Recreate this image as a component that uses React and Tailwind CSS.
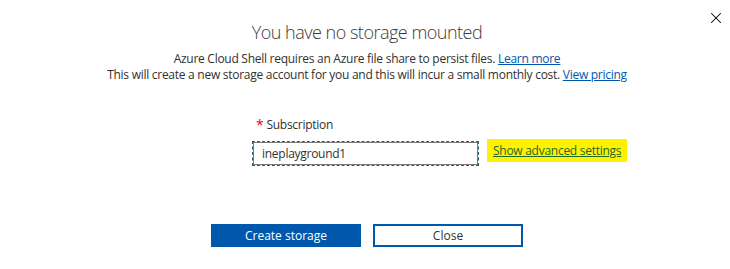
import { X } from 'lucide-react';

export default function App() {
  return (
    <div
      className="relative w-[730px] h-[269px] bg-white text-[#323130] overflow-hidden"
      style={{ fontFamily: '"Open Sans", "Noto Sans", sans-serif' }}
    >
      {/* Close icon */}
      <button className="absolute top-[9px] right-[5px] w-[18px] h-[18px] flex items-center justify-center text-black">
        <X size={18} strokeWidth={1.4} />
      </button>

      <div className="flex flex-col items-center pl-[4px] pt-[19px]">
        <h2 className="text-[18px] tracking-[-0.5px] font-light leading-[26px] text-[#3b3a39]">You have no storage mounted</h2>
        <div className="mt-[6px] text-[12px] tracking-[-0.27px] leading-[16px] text-center">
          <p>
            Azure Cloud Shell requires an Azure file share to persist files.{' '}
            <a href="#" className="text-[#0058ad] underline">Learn more</a>
          </p>
          <p>
            This will create a new storage account for you and this will incur a small monthly cost.{' '}
            <a href="#" className="text-[#0058ad] underline">View pricing</a>
          </p>
        </div>
      </div>

      {/* Subscription form */}
      <div className="mt-[34px] ml-[253px] tracking-[-0.27px]">
        <div className="flex items-center gap-[3px] pl-[3px] text-[12px] leading-[16px]">
          <span className="text-[#e00] text-[14px] leading-[10px]">*</span>
          <span>Subscription</span>
        </div>
        <div className="flex items-start mt-[9px]">
          <div className="w-[225px] h-[23px] outline outline-1 outline-dashed outline-[#1f5f76] border border-[#7a7a7a] flex items-center pl-[8px] text-[12px]">
            ineplayground1
          </div>
          <a
            href="#"
            className="ml-[9px] -mt-[3px] h-[23px] px-[6px] flex items-center bg-[#fff200] text-[#1d6a2a] underline text-[12px]"
          >
            Show advanced settings
          </a>
        </div>
      </div>

      {/* Buttons */}
      <div className="flex justify-center gap-[12px] mt-[59px] pl-[4px]">
        <button className="w-[150px] h-[23px] bg-[#0058ad] text-white text-[12px]">Create storage</button>
        <button className="w-[150px] h-[23px] border-2 border-[#0058ad] text-[#323130] text-[12px]">Close</button>
      </div>
    </div>
  );
}
